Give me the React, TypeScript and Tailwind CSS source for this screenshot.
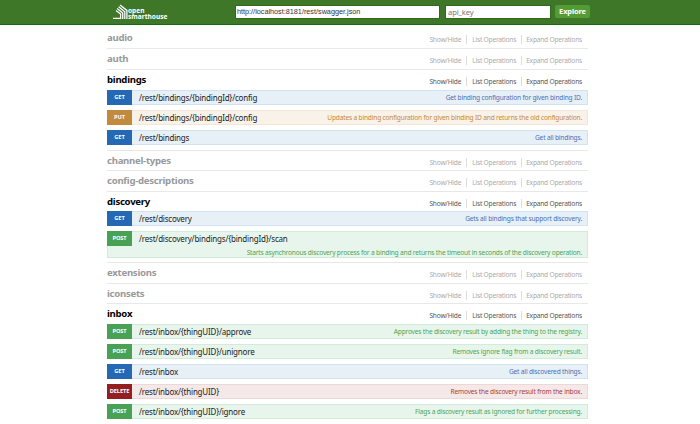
type Method = 'GET' | 'PUT' | 'POST' | 'DELETE';
type Operation = { method: Method; path: string; summary: string; wide?: boolean };
type Section = { name: string; height: string; head?: string; ops?: Operation[] };

const rowStyle: Record<Method, string> = {
  GET: 'bg-[#e7eff7] border-[#d3e2f0] text-[#4a70b5]',
  PUT: 'bg-[#f9f2e9] border-[#f4e6d6] text-[#c5893a]',
  POST: 'bg-[#e8f5ec] border-[#d3ecda] text-[#4ca555]',
  DELETE: 'bg-[#f5e8e8] border-[#eed7d7] text-[#a63c40]',
};

const badgeStyle: Record<Method, string> = {
  GET: 'bg-[#2568b3]',
  PUT: 'bg-[#c28a3c]',
  POST: 'bg-[#48a155]',
  DELETE: 'bg-[#941f23]',
};

const sections: Section[] = [
  { name: 'audio', height: 'h-[21px]' },
  { name: 'auth', height: 'h-[21px]' },
  {
    name: 'bindings',
    height: 'h-[81px]',
    head: 'h-5',
    ops: [
      { method: 'GET', path: '/rest/bindings/{bindingId}/config', summary: 'Get binding configuration for given binding ID.' },
      { method: 'PUT', path: '/rest/bindings/{bindingId}/config', summary: 'Updates a binding configuration for given binding ID and returns the old configuration.' },
      { method: 'GET', path: '/rest/bindings', summary: 'Get all bindings.' },
    ],
  },
  { name: 'channel-types', height: 'h-5' },
  { name: 'config-descriptions', height: 'h-[21px]' },
  {
    name: 'discovery',
    height: 'h-[71px]',
    head: 'h-[19px]',
    ops: [
      { method: 'GET', path: '/rest/discovery', summary: 'Gets all bindings that support discovery.' },
      { method: 'POST', path: '/rest/discovery/bindings/{bindingId}/scan', summary: 'Starts asynchronous discovery process for a binding and returns the timeout in seconds of the discovery operation.', wide: true },
    ],
  },
  { name: 'extensions', height: 'h-[21px]' },
  { name: 'iconsets', height: 'h-5' },
  {
    name: 'inbox',
    height: 'h-[130px]',
    head: 'h-5',
    ops: [
      { method: 'POST', path: '/rest/inbox/{thingUID}/approve', summary: 'Approves the discovery result by adding the thing to the registry.' },
      { method: 'POST', path: '/rest/inbox/{thingUID}/unignore', summary: 'Removes ignore flag from a discovery result.' },
      { method: 'GET', path: '/rest/inbox', summary: 'Get all discovered things.' },
      { method: 'DELETE', path: '/rest/inbox/{thingUID}', summary: 'Removes the discovery result from the inbox.' },
      { method: 'POST', path: '/rest/inbox/{thingUID}/ignore', summary: 'Flags a discovery result as ignored for further processing.' },
    ],
  },
];

function Logo() {
  return (
    <div className="flex h-4 w-[122px] shrink-0 text-white">
      <svg width="15" height="16" viewBox="0 0 15 16" fill="none" stroke="white" strokeWidth="1.25">
        <path d="M0 14.4H7.6V10L3 6.4" />
        <path d="M4.2 4.6L9.7 9V15" />
        <path d="M5.6 2.8L11.8 7.8V15" />
        <path d="M7 .9L13.9 6.4V15" />
      </svg>
      <div className="pt-[4px] text-[6.6px] font-bold">
        <div className="h-[6px] leading-[6px]">open</div>
        <div className="h-[6px] leading-[6px]">smarthouse</div>
      </div>
    </div>
  );
}

function Header() {
  return (
    <header className="flex h-[25px] border-b border-[#146b10] bg-[#3f7729] pl-[113px] pt-1">
      <Logo />
      <div className="mt-px flex h-[14px] w-[205px] items-center border border-[#2f6a1c] bg-white pl-px font-['Liberation_Sans',sans-serif] text-[7.25px] text-[#333]">
        http://localhost:8181/rest/swagger.json
      </div>
      <div className="ml-[5px] mt-px flex h-[14px] w-[106px] items-center border border-[#2f6a1c] bg-white pl-[2px] text-[7.6px] leading-[12px] tracking-[-0.1px] text-[#777]">
        api_key
      </div>
      <button className="ml-1 mt-px flex h-[13px] w-[35px] items-center justify-center rounded-[2px] bg-[#549b35] text-[7.5px] font-bold tracking-[-0.15px] text-white">
        Explore
      </button>
    </header>
  );
}

function OperationRow({ method, path, summary, wide }: Operation) {
  return (
    <div className={`flex border ${wide ? 'h-[27px]' : 'h-[15px]'} ${rowStyle[method]}`}>
      <div className={`-ml-px -mt-px flex h-[15px] w-[25px] shrink-0 items-center justify-center text-[5.7px] font-bold tracking-[-0.1px] text-white ${badgeStyle[method]}`}>
        {method}
      </div>
      <div className={`flex min-w-0 grow pl-[7px] pr-[5px] ${wide ? 'flex-col' : 'justify-between'}`}>
        <div className="whitespace-nowrap text-[8px] leading-[13px] tracking-[-0.2px] text-[#222]">{path}</div>
        <div className={`whitespace-nowrap text-[6.6px] leading-[13px] tracking-[-0.18px] ${wide ? 'mt-px self-end' : ''}`}>{summary}</div>
      </div>
    </div>
  );
}

function SectionBlock({ name, height, head = 'h-5', ops }: Section) {
  const open = Boolean(ops);
  return (
    <section className={`border-b border-[#e8e8e8] ${height}`}>
      <div className={`flex justify-between ${head}`}>
        <h2 className={`text-[9.6px] font-bold leading-[19px] tracking-[-0.27px] ${open ? 'text-black' : 'text-[#999]'}`}>{name}</h2>
        <div className={`mr-[6px] mt-[7px] flex h-[9px] text-[6.6px] leading-[9px] tracking-[-0.2px] ${open ? 'text-[#555]' : 'text-[#aaa]'}`}>
          <span className="border-r border-[#ddd] pr-[5px]">Show/Hide</span>
          <span className="border-r border-[#ddd] px-[5px]">List Operations</span>
          <span className="pl-1">Expand Operations</span>
        </div>
      </div>
      {ops && <div className="flex flex-col gap-[5px]">{ops.map((op) => <OperationRow key={op.method + op.path} {...op} />)}</div>}
    </section>
  );
}

export default function App() {
  return (
    <div className="h-[424px] w-[700px] overflow-hidden bg-white font-['Noto_Sans',sans-serif]">
      <Header />
      <main className="ml-[107px] mt-[3px] w-[481px]">
        {sections.map((section) => <SectionBlock key={section.name} {...section} />)}
      </main>
    </div>
  );
}
